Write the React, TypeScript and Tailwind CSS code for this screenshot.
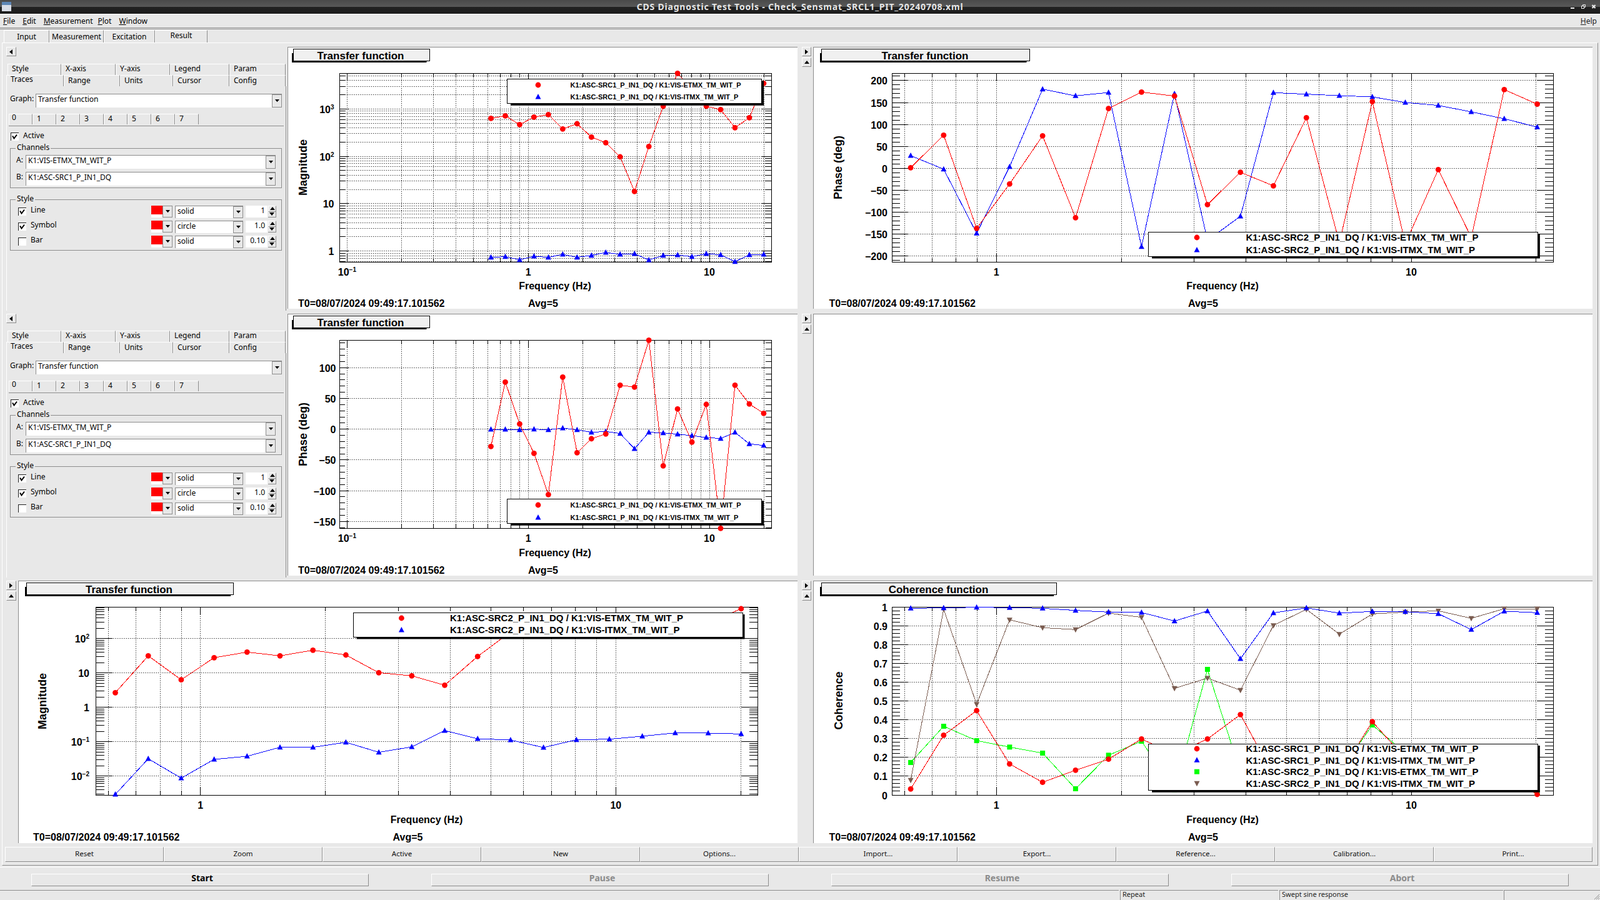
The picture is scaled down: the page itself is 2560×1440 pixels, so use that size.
import React from "react";

type Marker = "c" | "t" | "s" | "d";
type Series = { color: string; marker: Marker; ys: number[] };
type Major = { y: number; label: React.ReactNode };
type LegendRow = { marker: Marker; color: string; text: string; y: number };
type ChartCfg = {
  x: number; y: number; w: number; h: number;
  l: number; r: number; t: number; b: number;
  x1: number; xDec: number;
  xs: number[];
  series: Series[];
  majors: Major[];
  minors: number[];
  minorGrid: boolean;
  labelRight: number;
  title: { x0: number; x1: number; cx: number; text: string };
  yTitle: { x: number; cy: number; text: string };
  xTitleCx: number;
  xTitleY: number;
  stamp: { x: number; avgX: number; y: number };
  legend: { x0: number; x1: number; y0: number; y1: number; mx: number; tx: number; tw: number; fs: number; rows: LegendRow[] };
  majorLen: number;
  minorLen: number;
};

const RED = "#ff0000";
const BLUE = "#0000ff";
const GREEN = "#00ff00";
const BROWN = "#7a5c50";
const S1E = "K1:ASC-SRC1_P_IN1_DQ / K1:VIS-ETMX_TM_WIT_P";
const S1I = "K1:ASC-SRC1_P_IN1_DQ / K1:VIS-ITMX_TM_WIT_P";
const S2E = "K1:ASC-SRC2_P_IN1_DQ / K1:VIS-ETMX_TM_WIT_P";
const S2I = "K1:ASC-SRC2_P_IN1_DQ / K1:VIS-ITMX_TM_WIT_P";

const range = (start: number, step: number) => Array.from({ length: 20 }, (_, i) => start + i * step);
const xsNarrow = range(785.5, 22.97);
const xsWide = range(1457.1, 52.76);
const xsBottom = range(184.5, 52.7);
const top = (a: number[]) => a.map((z) => 60 + z / 3);
const mid = (a: number[]) => a.map((z) => 500 + z / 3);
const low = (a: number[]) => a.map((z) => 920 + z / 3);

const pow = (n: number): React.ReactNode =>
  n === 0 ? "1" : n === 1 ? "10" : (
    <>
      10<tspan dy={-6} fontSize={10}>{n < 0 ? "\u2212" + -n : n}</tspan>
    </>
  );

function logAxis(y1: number, dec: number, t: number, b: number, from: number, to: number) {
  const majors: Major[] = [];
  const minors: number[] = [];
  for (let d = from; d <= to; d++) {
    const y = y1 - dec * d;
    if (y >= t && y <= b) majors.push({ y, label: pow(d) });
    for (let m = 2; m <= 9; m++) {
      const my = y1 - dec * (d + Math.log10(m));
      if (my >= t && my <= b) minors.push(my);
    }
  }
  return { majors, minors };
}

function linAxis(y0: number, pxPerMajor: number, t: number, b: number, vals: number[], sub: number, fmt: (v: number) => string) {
  const step = vals[1] - vals[0];
  const majors: Major[] = vals.map((v) => ({ y: y0 - ((v - vals[0]) / step) * pxPerMajor, label: fmt(v) }));
  const minors: number[] = [];
  const unit = pxPerMajor / sub;
  for (let k = -200; k < 200; k++) {
    const y = y0 - k * unit;
    if (k % sub !== 0 && y >= t && y <= b) minors.push(y);
  }
  return { majors, minors };
}

const signed = (v: number) => (v < 0 ? "\u2212" + -v : String(v));

const ax1 = logAxis(401.7, 75.8, 117, 419, -1, 3);
const ax2 = linAxis(269.3 + 4 * 35.1, 35.1, 117, 419, [-200, -150, -100, -50, 0, 50, 100, 150, 200], 5, signed);
const ax3 = linAxis(686.7 + 3 * 49.2, 49.2, 544, 845, [-150, -100, -50, 0, 50, 100], 5, signed);
const ax5 = logAxis(1131.7, 55, 971, 1272, -3, 2);
const ax6 = linAxis(1272, 30.03, 971, 1272, [0, 0.1, 0.2, 0.3, 0.4, 0.5, 0.6, 0.7, 0.8, 0.9, 1], 5, (v) => String(Math.round(v * 10) / 10));

const charts: Record<string, ChartCfg> = {
  a: {
    x: 460, y: 75, w: 816, h: 419, l: 543, r: 1234, t: 117, b: 419, x1: 845.2, xDec: 289.8, xs: xsNarrow,
    series: [
      { color: BLUE, marker: "t", ys: top([1055, 1052, 1067, 1050, 1055, 1041, 1055, 1046, 1032, 1041, 1038, 1068, 1046, 1044, 1052, 1038, 1043, 1076, 1043, 1041]) },
      { color: RED, marker: "c", ys: top([388, 376, 418, 382, 370, 439, 414, 478, 505, 573, 739, 523, 330, 172, 250, 330, 346, 433, 385, 220]) },
    ],
    ...ax1, minorGrid: true, labelRight: 534.5,
    title: { x0: 469, x1: 686.5, cx: 577, text: "Transfer function" },
    yTitle: { x: 484.5, cy: 268, text: "Magnitude" }, xTitleCx: 888, xTitleY: 457.5,
    stamp: { x: 477, avgX: 845, y: 485 },
    legend: { x0: 811.5, x1: 1218.7, y0: 126.3, y1: 165.3, mx: 861, tx: 912.5, tw: 273, fs: 11, rows: [
      { marker: "c", color: RED, text: S1E, y: 136 }, { marker: "t", color: BLUE, text: S1I, y: 155 } ] },
    majorLen: 16, minorLen: 9,
  },
  b: {
    x: 1301, y: 75, w: 1247, h: 419, l: 1427, r: 2485, t: 117, b: 419, x1: 1594.3, xDec: 663.7, xs: xsWide,
    series: [
      { color: BLUE, marker: "t", ys: top([567, 632, 940, 620, 248, 280, 264, 1004, 270, 974, 858, 265, 272, 279, 285, 312, 326, 357, 390, 430]) },
      { color: RED, marker: "c", ys: top([625, 469, 916, 703, 472, 865, 341, 262, 281, 802, 647, 712, 385, 985, 308, 990, 634, 960, 250, 320]) },
    ],
    ...ax2, minorGrid: false, labelRight: 1420,
    title: { x0: 1314, x1: 1646.5, cx: 1480, text: "Transfer function" },
    yTitle: { x: 1341, cy: 268, text: "Phase (deg)" }, xTitleCx: 1956, xTitleY: 457.5,
    stamp: { x: 1326.5, avgX: 1901, y: 485 },
    legend: { x0: 1837.6, x1: 2460.4, y0: 371.7, y1: 410, mx: 1915, tx: 1993.5, tw: 372, fs: 15, rows: [
      { marker: "c", color: RED, text: S2E, y: 380 }, { marker: "t", color: BLUE, text: S2I, y: 400 } ] },
    majorLen: 26, minorLen: 13,
  },
  c: {
    x: 460, y: 502, w: 816, h: 419, l: 543, r: 1234, t: 544, b: 845, x1: 845.2, xDec: 289.8, xs: xsNarrow,
    series: [
      { color: BLUE, marker: "t", ys: mid([561, 561, 563, 560, 563, 555, 563, 575, 571, 581, 654, 575, 578, 584, 591, 600, 605, 575, 631, 638]) },
      { color: RED, marker: "c", ys: mid([643, 334, 535, 676, 874, 310, 673, 606, 583, 349, 358, 133, 736, 463, 622, 441, 1036, 349, 439, 484]) },
    ],
    ...ax3, minorGrid: false, labelRight: 537.5,
    title: { x0: 469, x1: 686.5, cx: 577, text: "Transfer function" },
    yTitle: { x: 484.5, cy: 695, text: "Phase (deg)" }, xTitleCx: 888, xTitleY: 885,
    stamp: { x: 477, avgX: 845, y: 912 },
    legend: { x0: 811.5, x1: 1218.7, y0: 798.3, y1: 837.3, mx: 861, tx: 912.5, tw: 273, fs: 11, rows: [
      { marker: "c", color: RED, text: S1E, y: 808 }, { marker: "t", color: BLUE, text: S1I, y: 828 } ] },
    majorLen: 16, minorLen: 9,
  },
  e: {
    x: 29, y: 929, w: 1247, h: 420, l: 153.5, r: 1212, t: 971, b: 1272, x1: 320.8, xDec: 664.5, xs: xsBottom,
    series: [
      { color: BLUE, marker: "t", ys: low([1053, 882, 975, 885, 870, 827, 827, 803, 851, 825, 747, 786, 792, 828, 791, 788, 774, 758, 759, 763]) },
      { color: RED, marker: "c", ys: low([565, 388, 503, 397, 370, 388, 361, 384, 469, 484, 529, 391, 273, 240, 230, 220, 230, 240, 230, 162]) },
    ],
    ...ax5, minorGrid: false, labelRight: 143,
    title: { x0: 42, x1: 373, cx: 206.5, text: "Transfer function" },
    yTitle: { x: 68, cy: 1122, text: "Magnitude" }, xTitleCx: 682.5, xTitleY: 1312,
    stamp: { x: 53, avgX: 628.6, y: 1339 },
    legend: { x0: 565, x1: 1188, y0: 980, y1: 1019, mx: 642.4, tx: 720, tw: 373, fs: 15, rows: [
      { marker: "c", color: RED, text: S2E, y: 989 }, { marker: "t", color: BLUE, text: S2I, y: 1008 } ] },
    majorLen: 26, minorLen: 13,
  },
  f: {
    x: 1301, y: 929, w: 1247, h: 420, l: 1427, r: 2485, t: 971, b: 1272, x1: 1594.3, xDec: 663.7, xs: xsWide,
    series: [
      { color: GREEN, marker: "s", ys: low([900, 726, 795, 826, 855, 1026, 865, 798, 1030, 453, 947, 960, 960, 947, 720, 855, 960, 960, 960, 1045]) },
      { color: BROWN, marker: "d", ys: low([985, 165, 620, 215, 253, 262, 183, 203, 544, 495, 553, 242, 165, 284, 187, 178, 172, 208, 162, 162]) },
      { color: BLUE, marker: "t", ys: low([160, 158, 155, 157, 160, 170, 178, 180, 221, 173, 402, 182, 158, 183, 175, 176, 186, 262, 174, 181]) },
      { color: RED, marker: "c", ys: low([1027, 769, 651, 907, 995, 937, 884, 787, 860, 787, 670, 960, 960, 960, 704, 880, 960, 960, 960, 1053]) },
    ],
    ...ax6, minorGrid: false, labelRight: 1420,
    title: { x0: 1314, x1: 1690, cx: 1501.5, text: "Coherence function" },
    yTitle: { x: 1341.5, cy: 1121, text: "Coherence" }, xTitleCx: 1956, xTitleY: 1312,
    stamp: { x: 1326.5, avgX: 1901, y: 1339 },
    legend: { x0: 1837.6, x1: 2460.4, y0: 1190, y1: 1264.3, mx: 1915, tx: 1993.5, tw: 372, fs: 15, rows: [
      { marker: "c", color: RED, text: S1E, y: 1198 }, { marker: "t", color: BLUE, text: S1I, y: 1216.3 },
      { marker: "s", color: GREEN, text: S2E, y: 1234.7 }, { marker: "d", color: BROWN, text: S2I, y: 1253.3 } ] },
    majorLen: 26, minorLen: 13,
  },
};

function Mark({ m, x, y, color }: { m: Marker; x: number; y: number; color: string }) {
  if (m === "c") return <circle cx={x} cy={y} r={4.4} fill={color} />;
  if (m === "s") return <rect x={x - 4} y={y - 4} width={8} height={8} fill={color} />;
  if (m === "t") return <polygon points={`${x},${y - 5} ${x + 4.5},${y + 3.5} ${x - 4.5},${y + 3.5}`} fill={color} />;
  return <polygon points={`${x},${y + 5} ${x + 4.5},${y - 3.5} ${x - 4.5},${y - 3.5}`} fill={color} />;
}

const FREQS = [0.1, 0.2, 0.3, 0.4, 0.5, 0.6, 0.7, 0.8, 0.9, 1, 2, 3, 4, 5, 6, 7, 8, 9, 10, 20];

function Chart({ c }: { c: ChartCfg }) {
  const vx = c.x + 1;
  const vy = c.y + 1;
  const vw = c.w - 1;
  const vh = c.h - 1;
  const crisp = { shapeRendering: "crispEdges" as const };
  const grid = { stroke: "#000", strokeWidth: 1, strokeDasharray: "1 2", ...crisp };
  const tick = { stroke: "#000", strokeWidth: 1, ...crisp };
  const freq = FREQS.map((f) => ({ f, x: c.x1 + c.xDec * Math.log10(f) })).filter((p) => p.x >= c.l && p.x <= c.r);
  const isMajorF = (f: number) => f === 0.1 || f === 1 || f === 10;
  const L = c.legend;
  return (
    <div className="bg-white border-t border-l border-[#8c8c8c] shrink-0">
      <svg className="block" width={vw} height={vh} viewBox={`${vx} ${vy} ${vw} ${vh}`} fontFamily="'Liberation Sans', Arial, sans-serif" fontWeight={700} fill="#000">
        <rect x={c.title.x0 - 2} y={c.y + 10} width={c.title.x1 - c.title.x0 - 2} height={15} fill="#000" />
        <rect x={c.title.x0 + 0.5} y={c.y + 3.5} width={c.title.x1 - c.title.x0} height={19} fill="#f0f0f0" stroke="#000" strokeWidth={1} {...crisp} />
        <text x={c.title.cx} y={c.y + 20} fontSize={17} textAnchor="middle">{c.title.text}</text>

        {freq.map((p) => (
          <line key={p.f} x1={p.x} x2={p.x} y1={c.t} y2={c.b} {...grid} />
        ))}
        {c.majors.map((m, i) => (
          <line key={i} x1={c.l} x2={c.r} y1={m.y} y2={m.y} {...grid} />
        ))}
        {c.minorGrid && c.minors.map((y, i) => <line key={i} x1={c.l} x2={c.r} y1={y} y2={y} {...grid} />)}

        {freq.map((p) => {
          const len = isMajorF(p.f) ? 13 : 6;
          return (
            <g key={p.f}>
              <line x1={p.x} x2={p.x} y1={c.t} y2={c.t + len} {...tick} />
              <line x1={p.x} x2={p.x} y1={c.b} y2={c.b - len} {...tick} />
            </g>
          );
        })}
        {c.majors.map((m, i) => (
          <g key={i}>
            <line x1={c.l} x2={c.l + c.majorLen} y1={m.y} y2={m.y} {...tick} />
            <line x1={c.r} x2={c.r - c.majorLen} y1={m.y} y2={m.y} {...tick} />
          </g>
        ))}
        {c.minors.map((y, i) => (
          <g key={i}>
            <line x1={c.l} x2={c.l + c.minorLen} y1={y} y2={y} {...tick} />
            <line x1={c.r} x2={c.r - c.minorLen} y1={y} y2={y} {...tick} />
          </g>
        ))}
        <rect x={c.l} y={c.t} width={c.r - c.l} height={c.b - c.t} fill="none" stroke="#000" strokeWidth={1} {...crisp} />

        {c.majors.map((m, i) => (
          <text key={i} x={c.labelRight} y={m.y + 6.5} fontSize={16} textAnchor="end">{m.label}</text>
        ))}
        {freq.filter((p) => isMajorF(p.f)).map((p) => (
          <text key={p.f} x={p.x} y={c.b + 22} fontSize={16} textAnchor="middle">
            {p.f === 0.1 ? pow(-1) : p.f === 1 ? "1" : "10"}
          </text>
        ))}
        <text x={c.xTitleCx} y={c.xTitleY + 5} fontSize={16} textAnchor="middle">Frequency (Hz)</text>
        <text transform={`rotate(-90 ${c.yTitle.x + 6} ${c.yTitle.cy})`} x={c.yTitle.x + 6} y={c.yTitle.cy} fontSize={18} textAnchor="middle">{c.yTitle.text}</text>
        <text x={c.stamp.x} y={c.stamp.y + 6} fontSize={16}>T0=08/07/2024 09:49:17.101562</text>
        <text x={c.stamp.avgX} y={c.stamp.y + 6} fontSize={16}>Avg=5</text>

        {c.series.map((s, i) => (
          <g key={i}>
            <polyline points={s.ys.map((y, k) => `${c.xs[k]},${y}`).join(" ")} fill="none" stroke={s.color} strokeWidth={1} {...crisp} />
            {s.ys.map((y, k) => (
              <Mark key={k} m={s.marker} x={c.xs[k]} y={y} color={s.color} />
            ))}
          </g>
        ))}

        <rect x={L.x0 + 5.5} y={L.y0 + 3} width={L.x1 - L.x0 - 2} height={L.y1 - L.y0 + 0.5} fill="#000" />
        <rect x={L.x0} y={L.y0} width={L.x1 - L.x0} height={L.y1 - L.y0} fill="#fff" stroke="#000" strokeWidth={1} {...crisp} />
        {L.rows.map((r, i) => (
          <g key={i}>
            <Mark m={r.marker} x={L.mx} y={r.y} color={r.color} />
            <text x={L.tx} y={r.y + L.fs * 0.36} fontSize={L.fs} textLength={r.text.includes("ITMX") ? L.tw * 0.985 : L.tw} lengthAdjust="spacingAndGlyphs">{r.text}</text>
          </g>
        ))}
      </svg>
    </div>
  );
}

function Tri({ dir = "down", size = 8 }: { dir?: "down" | "up" | "left" | "right"; size?: number }) {
  const pts = { down: "0,1 8,1 4,6", up: "0,6 8,6 4,1", left: "6,0 6,8 1,4", right: "1,0 1,8 6,4" }[dir];
  return (
    <svg width={size} height={size} viewBox="0 0 8 8" className="block">
      <polygon points={pts} fill="#000" />
    </svg>
  );
}

function ArrowBtn({ dir }: { dir: "left" | "right" | "up" }) {
  return (
    <div className="w-full h-[15px] flex items-center justify-center border-t border-l border-white border-r-[#8c8c8c] border-b-[#8c8c8c] border-r border-b">
      <Tri dir={dir} size={8} />
    </div>
  );
}

function DropBtn() {
  return (
    <div className="w-[16px] self-stretch shrink-0 flex items-center justify-center bg-[#e8e8e8] outline outline-[#8c8c8c] -outline-offset-1">
      <Tri size={7} />
    </div>
  );
}

function Combo({ value, className }: { value: string; className: string }) {
  return (
    <div className={"flex bg-white border-l border-t border-[#8c8c8c] " + className}>
      <div className="flex-1 pl-[3px] pt-px text-[12px] leading-[14px] whitespace-nowrap">{value}</div>
      <DropBtn />
    </div>
  );
}

function Check({ on }: { on: boolean }) {
  return (
    <div className="w-[13px] h-[13px] bg-white border-t border-l border-[#222] border-r-white border-b-white shrink-0">
      {on && (
        <svg width={11} height={11} viewBox="0 0 11 11" className="block">
          <path d="M2 4.5 L4.5 8.5 L9 2.5" fill="none" stroke="#000" strokeWidth={2} />
        </svg>
      )}
    </div>
  );
}

function Tab({ label, className }: { label: string; className: string }) {
  return (
    <div className={"shrink-0 border-t border-l border-white border-r border-r-[#8c8c8c] text-[12px] " + className}>
      {label}
    </div>
  );
}

function Spin() {
  return (
    <div className="ml-px w-[13px] h-[19px] flex flex-col">
      <div className="h-[10px] flex items-center justify-center border-t border-l border-white border-r border-b border-r-[#8c8c8c] border-b-[#8c8c8c]">
        <Tri dir="up" size={8} />
      </div>
      <div className="h-[9px] flex items-center justify-center border-r border-b border-[#8c8c8c]">
        <Tri dir="down" size={8} />
      </div>
    </div>
  );
}

function StyleRow({ label, on, kind, num }: { label: string; on: boolean; kind: string; num: string }) {
  return (
    <div className="flex h-[20px] items-start pl-[12px]">
      <div className="mt-[3px]"><Check on={on} /></div>
      <div className="ml-[7px] text-[12px] leading-[14px]">{label}</div>
      <div className="flex-1" />
      <div className="flex w-[34px] h-[19px]">
        <div className="w-[18px] h-full bg-white">
          <div className="h-[14px] bg-[#ff0000]" />
        </div>
        <DropBtn />
      </div>
      <Combo value={kind} className="ml-[4px] w-[109px] h-[20px]" />
      <div className="ml-[4px] w-[35px] h-[19px] bg-white text-right pr-[4px] pt-px text-[12px] leading-[14px]">{num}</div>
      <Spin />
    </div>
  );
}

function Options() {
  return (
    <div className="w-[450px] shrink-0 text-black">
      <div className="w-[16px]"><ArrowBtn dir="left" /></div>
      <div className="mt-[12px] flex ml-[2px] h-[18px]">
        <Tab label="Style" className="w-[86px] pl-[6px] leading-[14px]" />
        <Tab label="X-axis" className="w-[87px] pl-[6px] leading-[14px]" />
        <Tab label="Y-axis" className="w-[87px] pl-[6px] leading-[14px]" />
        <Tab label="Legend" className="w-[95px] pl-[6px] leading-[14px]" />
        <Tab label="Param" className="w-[90px] pl-[6px] leading-[14px]" />
      </div>
      <div className="flex h-[18px]">
        <Tab label="Traces" className="w-[92px] pl-[6px] pt-px leading-[10px]" />
        <Tab label="Range" className="w-[90px] pl-[6px] pt-px leading-[14px]" />
        <Tab label="Units" className="w-[85px] pl-[6px] pt-px leading-[14px]" />
        <Tab label="Cursor" className="w-[90px] pl-[6px] pt-px leading-[14px]" />
        <Tab label="Config" className="w-[90px] pl-[6px] pt-px leading-[14px]" />
      </div>
      <div className="w-[448px] h-[359px] border-l border-white border-r border-r-[#8c8c8c]">
        <div className="flex items-start pt-[12px] pl-[5px] h-[34px]">
          <div className="w-[41px] pt-[1px] text-[12px] leading-[14px]">Graph:</div>
          <Combo value="Transfer function" className="w-[394px] h-[22px]" />
        </div>
        <div className="ml-[3px] mt-[10px] w-[440px] h-[20px] flex items-start border-b border-[#8c8c8c]">
          <Tab label="0" className="w-[38px] h-[17px] pl-[4px] leading-[10px]" />
          <Tab label="1" className="w-[38px] h-[17px] pl-[6px] leading-[14px]" />
          <Tab label="2" className="w-[38px] h-[17px] pl-[6px] leading-[14px]" />
          <Tab label="3" className="w-[38px] h-[17px] pl-[6px] leading-[14px]" />
          <Tab label="4" className="w-[38px] h-[17px] pl-[6px] leading-[14px]" />
          <Tab label="5" className="w-[38px] h-[17px] pl-[6px] leading-[14px]" />
          <Tab label="6" className="w-[38px] h-[17px] pl-[6px] leading-[14px]" />
          <Tab label="7" className="w-[38px] h-[17px] pl-[6px] leading-[14px]" />
        </div>
        <div className="flex items-start mt-[9px] ml-[6px] h-[14px]">
          <div className="mt-px"><Check on /></div>
          <div className="ml-[7px] -mt-[1px] text-[12px] leading-[14px]">Active</div>
        </div>
        <div className="relative ml-[5px] mt-[12px] w-[435px] h-[64px] border border-[#8c8c8c] pl-[9px] pt-[10px] flex flex-col gap-[5px]">
          <div className="absolute -top-[9px] left-[8px] px-[2px] bg-[#e8e8e8] text-[12px] leading-[14px]">Channels</div>
          <div className="flex items-start">
            <div className="w-[15px] pt-[1px] text-[12px] leading-[14px]">A:</div>
            <Combo value="K1:VIS-ETMX_TM_WIT_P" className="w-[400px] h-[22px]" />
          </div>
          <div className="flex items-start">
            <div className="w-[15px] pt-[1px] text-[12px] leading-[14px]">B:</div>
            <Combo value="K1:ASC-SRC1_P_IN1_DQ" className="w-[400px] h-[22px]" />
          </div>
        </div>
        <div className="relative ml-[5px] mt-[18px] w-[435px] h-[82px] border border-[#8c8c8c] pt-[9px] pr-[8px] flex flex-col gap-[4px]">
          <div className="absolute -top-[9px] left-[8px] px-[2px] bg-[#e8e8e8] text-[12px] leading-[14px]">Style</div>
          <StyleRow label="Line" on kind="solid" num="1" />
          <StyleRow label="Symbol" on kind="circle" num="1.0" />
          <StyleRow label="Bar" on={false} kind="solid" num="0.10" />
        </div>
      </div>
    </div>
  );
}

function SideArrows({ className }: { className: string }) {
  return (
    <div className={"shrink-0 flex flex-col gap-[2px] " + className}>
      <ArrowBtn dir="right" />
      <ArrowBtn dir="up" />
    </div>
  );
}

function ActionBtn({ label }: { label: string }) {
  return (
    <div className="w-[254px] h-[24px] pb-[2px] flex items-center justify-center border-t border-l border-white border-r border-b border-r-[#8c8c8c] border-b-[#8c8c8c] text-[11.5px] text-[#111]">
      {label}
    </div>
  );
}

function RunBtn({ label, enabled }: { label: string; enabled?: boolean }) {
  return (
    <div className={"w-[540px] h-[20px] pl-[7px] flex justify-center border-t border-l border-white border-r border-b border-r-[#8c8c8c] border-b-[#8c8c8c] text-[14px] leading-[12px] font-bold " + (enabled ? "text-black" : "text-[#8c8c8c]")}>
      {label}
    </div>
  );
}

export default function App() {
  return (
    <div className="w-[2560px] h-[1440px] overflow-hidden bg-[#e8e8e8] text-black font-['Liberation_Sans',Arial,sans-serif]">
      <div className="relative h-[22px] pb-[2px] flex items-center justify-center bg-[linear-gradient(#4a4a4a_0,#585858_50%,#222222_50%,#1c1c1c_100%)]">
        <svg width={15} height={15} viewBox="0 0 15 15" className="absolute left-[3px] top-[3px]">
          <rect width={15} height={15} fill="#d9dde6" />
          <rect width={15} height={5} fill="#5d86b5" />
        </svg>
        <div className="font-['DejaVu_Sans',sans-serif] font-bold text-[14px] tracking-[0.8px] text-[#e4e4e4] whitespace-nowrap">
          CDS Diagnostic Test Tools - Check_Sensmat_SRCL1_PIT_20240708.xml
        </div>
        <svg width={50} height={12} viewBox="0 0 50 12" className="absolute right-[4px] top-[6px]">
          <rect x={7} y={6} width={6} height={2} fill="#e8e8e8" />
          <rect x={24.5} y={3.5} width={4} height={4} fill="none" stroke="#e8e8e8" strokeWidth={1} />
          <path d="M26.5 3 V1.5 H30.5 V5.5 H29" fill="none" stroke="#e8e8e8" strokeWidth={1} />
          <path d="M41.5 2 L46.5 7 M46.5 2 L41.5 7" stroke="#e8e8e8" strokeWidth={2.2} />
        </svg>
      </div>
      <div className="h-[23px] border-t border-t-white border-b border-b-[#8c8c8c] flex items-center justify-between pl-[5px] pr-[5px] text-[12px]">
        <div className="flex gap-[12px]">
          <span><span className="underline">F</span>ile</span>
          <span><span className="underline">E</span>dit</span>
          <span><span className="underline">M</span>easurement</span>
          <span className="-ml-[4px]"><span className="underline">P</span>lot</span>
          <span><span className="underline">W</span>indow</span>
        </div>
        <span className="text-[#222]"><span className="underline">H</span>elp</span>
      </div>
      <div className="mt-px h-[22px] border-t border-[#8c8c8c] pl-[6px] pt-[1px] flex items-start text-[12px]">
        <Tab label="Input" className="w-[73px] h-[20px] text-center pt-[3px] leading-[14px]" />
        <Tab label="Measurement" className="w-[87px] h-[20px] text-center pt-[3px] leading-[14px]" />
        <Tab label="Excitation" className="w-[82px] h-[20px] text-center pt-[3px] leading-[14px]" />
        <Tab label="Result" className="w-[84px] h-[20px] text-center pt-[1px] leading-[14px]" />
      </div>

      <div className="ml-[3px] w-[2554px] h-[1317px] border-t border-l border-white border-r border-b border-r-[#8c8c8c] border-b-[#8c8c8c] pl-[6px] pt-[6px]">
        <div className="flex h-[419px]">
          <Options />
          <Chart c={charts.a} />
          <SideArrows className="ml-[7px] w-[15px]" />
          <div className="ml-[3px]"><Chart c={charts.b} /></div>
        </div>
        <div className="flex h-[419px] mt-[8px]">
          <Options />
          <Chart c={charts.c} />
          <SideArrows className="ml-[7px] w-[15px]" />
          <div className="ml-[3px] w-[1247px] bg-white border-t border-l border-[#8c8c8c]" />
        </div>
        <div className="flex h-[420px] mt-[8px]">
          <SideArrows className="w-[16px]" />
          <div className="ml-[3px]"><Chart c={charts.e} /></div>
          <SideArrows className="ml-[7px] w-[15px]" />
          <div className="ml-[3px]"><Chart c={charts.f} /></div>
        </div>
        <div className="flex -ml-[2px] mt-[6px]">
          {["Reset", "Zoom", "Active", "New", "Options...", "Import...", "Export...", "Reference...", "Calibration...", "Print..."].map((l) => (
            <ActionBtn key={l} label={l} />
          ))}
        </div>
      </div>

      <div className="mt-[2px] h-[37px] border-t border-white pt-[10px] pl-[50px] flex gap-[100px]">
        <RunBtn label="Start" enabled />
        <RunBtn label="Pause" />
        <RunBtn label="Resume" />
        <RunBtn label="Abort" />
      </div>
      <div className="flex h-[16px] text-[11px] leading-[12px] text-[#222]">
        <div className="w-[1790px] border-t border-[#8c8c8c]" />
        <div className="ml-[2px] w-[253px] border-t border-l border-[#8c8c8c] pl-[3px]">Repeat</div>
        <div className="ml-[2px] w-[358px] border-t border-l border-[#8c8c8c] pl-[3px]">Swept sine response</div>
        <div className="relative ml-[1px] flex-1 border-t border-l border-[#8c8c8c]">
          <svg width={12} height={12} viewBox="0 0 12 12" className="absolute right-0 bottom-0">
            <path d="M11 3 L3 11 M11 6 L6 11 M11 9 L9 11" stroke="#8c8c8c" strokeWidth={1} />
          </svg>
        </div>
      </div>
    </div>
  );
}
